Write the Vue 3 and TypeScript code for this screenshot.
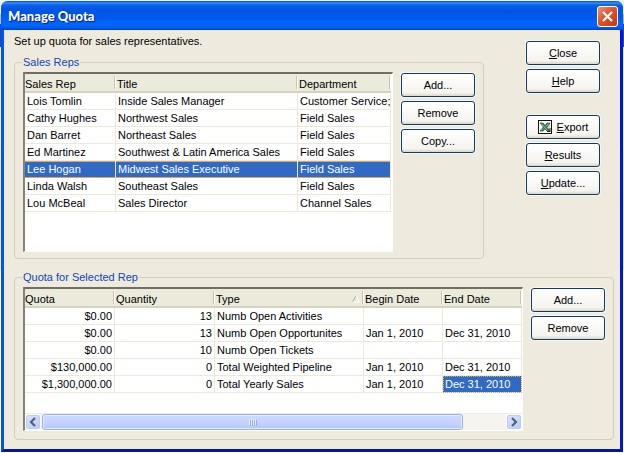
<script setup lang="ts">
import { ref } from 'vue'

interface Rep {
  name: string
  title: string
  department: string
}

interface Quota {
  quota: string
  quantity: number
  type: string
  begin: string
  end: string
}

const reps: Rep[] = [
  { name: 'Lois Tomlin', title: 'Inside Sales Manager', department: 'Customer Service;' },
  { name: 'Cathy Hughes', title: 'Northwest Sales', department: 'Field Sales' },
  { name: 'Dan Barret', title: 'Northeast Sales', department: 'Field Sales' },
  { name: 'Ed Martinez', title: 'Southwest & Latin America Sales', department: 'Field Sales' },
  { name: 'Lee Hogan', title: 'Midwest Sales Executive', department: 'Field Sales' },
  { name: 'Linda Walsh', title: 'Southeast Sales', department: 'Field Sales' },
  { name: 'Lou McBeal', title: 'Sales Director', department: 'Channel Sales' },
]

const quotas: Quota[] = [
  { quota: '$0.00', quantity: 13, type: 'Numb Open Activities', begin: '', end: '' },
  { quota: '$0.00', quantity: 13, type: 'Numb Open Opportunites', begin: 'Jan 1, 2010', end: 'Dec 31, 2010' },
  { quota: '$0.00', quantity: 10, type: 'Numb Open Tickets', begin: '', end: '' },
  { quota: '$130,000.00', quantity: 0, type: 'Total Weighted Pipeline', begin: 'Jan 1, 2010', end: 'Dec 31, 2010' },
  { quota: '$1,300,000.00', quantity: 0, type: 'Total Yearly Sales', begin: 'Jan 1, 2010', end: 'Dec 31, 2010' },
]

const selectedRep = ref(4)
const selectedQuota = ref(4)
</script>

<template>
  <div class="desktop">
    <main class="window">
      <header class="titlebar">
        <h1>Manage Quota</h1>
        <button class="close" type="button" aria-label="Close window">
          <svg viewBox="0 0 21 21" width="21" height="21" aria-hidden="true">
            <path d="M5.500 5.500L15.500 15.500M15.500 5.500L5.500 15.500" stroke="#fff" stroke-width="2.4" fill="none" />
          </svg>
        </button>
      </header>

      <div class="content">
        <div class="upper">
          <div class="left">
            <p class="intro">Set up quota for sales representatives.</p>
            <fieldset class="group">
              <legend>Sales Reps</legend>
              <div class="group-body">
                <div class="list reps">
                  <table>
                    <colgroup>
                      <col class="c-name" />
                      <col class="c-title" />
                      <col />
                    </colgroup>
                    <thead>
                      <tr>
                        <th>Sales Rep</th>
                        <th>Title</th>
                        <th>Department</th>
                      </tr>
                    </thead>
                    <tbody>
                      <tr
                        v-for="(rep, i) in reps"
                        :key="rep.name"
                        :class="{ selected: i === selectedRep }"
                        @click="selectedRep = i"
                      >
                        <td>{{ rep.name }}</td>
                        <td>{{ rep.title }}</td>
                        <td>{{ rep.department }}</td>
                      </tr>
                    </tbody>
                  </table>
                </div>
                <div class="buttons">
                  <button class="btn" type="button">Add...</button>
                  <button class="btn" type="button">Remove</button>
                  <button class="btn" type="button">Copy...</button>
                </div>
              </div>
            </fieldset>
          </div>

          <div class="buttons side">
            <button class="btn" type="button"><span><u>C</u>lose</span></button>
            <button class="btn" type="button"><span><u>H</u>elp</span></button>
            <button class="btn export" type="button">
              <svg viewBox="0 0 14 14" width="14" height="14" aria-hidden="true">
                <rect x="0.5" y="0.5" width="13" height="13" fill="#fff" stroke="#111" />
                <path d="M9 3h3v9H9z" fill="#c9d6c9" />
                <path d="M2 3h3l2 2.5L9 3h3L8.6 7.2 12 11H9L6.900 8.800 5 11H2l3.400-4z" fill="#3f8450" stroke="#123c1c" stroke-width="0.7" />
                <path d="M3 3.500l6.500 7M10.500 3.500L8 6.500M5 8.500L3 10.500" stroke="#b9dcbd" stroke-width="0.7" />
                <path d="M9 11.500h3.500M12 8v3" stroke="#222" />
              </svg>
              <span><u>E</u>xport</span>
            </button>
            <button class="btn" type="button"><span><u>R</u>esults</span></button>
            <button class="btn" type="button"><span><u>U</u>pdate...</span></button>
          </div>
        </div>

        <fieldset class="group">
          <legend>Quota for Selected Rep</legend>
          <div class="group-body">
            <div class="list quotas">
              <table>
                <colgroup>
                  <col class="c-quota" />
                  <col class="c-quantity" />
                  <col />
                  <col class="c-date" />
                  <col class="c-date" />
                </colgroup>
                <thead>
                  <tr>
                    <th>Quota</th>
                    <th>Quantity</th>
                    <th>
                      <div class="sorted">
                        Type
                        <svg viewBox="0 0 8 8" width="8" height="8" aria-hidden="true">
                          <path d="M0.500 7L4 1" stroke="#aca899" fill="none" />
                          <path d="M4 1L7.500 7H0.500" stroke="#fff" fill="none" />
                        </svg>
                      </div>
                    </th>
                    <th>Begin Date</th>
                    <th>End Date</th>
                  </tr>
                </thead>
                <tbody>
                  <tr v-for="(row, i) in quotas" :key="row.type" @click="selectedQuota = i">
                    <td class="num">{{ row.quota }}</td>
                    <td class="num">{{ row.quantity }}</td>
                    <td>{{ row.type }}</td>
                    <td>{{ row.begin }}</td>
                    <td :class="{ focused: i === selectedQuota }">{{ row.end }}</td>
                  </tr>
                </tbody>
              </table>
              <div class="scrollbar">
                <button class="arrow" type="button" aria-label="Scroll left">
                  <svg viewBox="0 0 8 10" width="8" height="10" aria-hidden="true">
                    <path d="M6 1L2 5L6 9" stroke="#4d6185" stroke-width="2.200" fill="none" />
                  </svg>
                </button>
                <div class="track">
                  <div class="thumb"><i></i><i></i><i></i><i></i></div>
                </div>
                <button class="arrow" type="button" aria-label="Scroll right">
                  <svg viewBox="0 0 8 10" width="8" height="10" aria-hidden="true">
                    <path d="M2 1L6 5L2 9" stroke="#4d6185" stroke-width="2.200" fill="none" />
                  </svg>
                </button>
              </div>
            </div>
            <div class="buttons">
              <button class="btn" type="button">Add...</button>
              <button class="btn" type="button">Remove</button>
            </div>
          </div>
        </fieldset>
      </div>
    </main>
  </div>
</template>

<style>
body {
  margin: 0;
}
</style>

<style scoped>
* {
  box-sizing: border-box;
}

.desktop {
  display: flex;
  min-height: 100vh;
  padding: 1px;
  background: linear-gradient(#eaf6ff 0 14px, #a9bdf5 14px 24px, #1a45d0 24px 47px, #e9effc 47px 150px, #dfeafa 150px 270px, #fff 270px);
  font: 11px/14px "Liberation Sans", Arial, sans-serif;
  color: #000;
}

.window {
  display: flex;
  flex: 1;
  flex-direction: column;
  min-width: 0;
  border: 3px solid;
  border-top: 0;
  border-color: #0855dd #0019cf #001a90 #0855dd;
  border-radius: 7px 7px 0 0;
  background: #eeebde;
}

.titlebar {
  display: flex;
  align-items: center;
  justify-content: space-between;
  height: 29px;
  margin: 0 -3px;
  padding: 1px 5px 0 7px;
  border-radius: 7px 7px 0 0;
  background: linear-gradient(#0a4bc8 0, #3a8cf5 2px, #0a62ee 4px, #0054e3 9px, #0058ea 16px, #0066ff 22px, #0062f8 26px, #0040cf 29px);
}

h1 {
  margin: 0;
  font: 900 13px/18px Lato, sans-serif;
  color: #fff;
  text-shadow: 1px 1px 1px #0a1f7a;
}

.close {
  display: flex;
  padding: 0;
  border: 1px solid #fff;
  border-radius: 3px;
  background: linear-gradient(135deg, #ee9476, #e0532b 45%, #c8360f);
}

.close svg {
  display: block;
  width: 19px;
  height: 19px;
}

.content {
  display: flex;
  flex: 1;
  flex-direction: column;
  gap: 11px;
  padding: 4px 6px 9px 10px;
}

.upper {
  display: flex;
  justify-content: space-between;
  gap: 42px;
  padding-right: 14px;
}

.left {
  flex: 1;
  min-width: 0;
}

.intro {
  margin: 0 0 7px;
}

.group {
  display: flex;
  flex-direction: column;
  min-width: 0;
  margin: 0;
  padding: 3px 8px 6px 8px;
  border: 1px solid #d0d0bf;
  border-radius: 4px;
}

.content > .group {
  flex: 1;
  padding-bottom: 8px;
}

legend {
  margin-left: -1px;
  padding: 0 1px;
  color: #1046b5;
}

.group-body {
  display: flex;
  flex: 1;
  gap: 8px;
}

.list {
  display: flex;
  flex: 1;
  flex-direction: column;
  min-width: 0;
  overflow: hidden;
  border: 1px solid #fff;
  border-top: 2px solid #716f64;
  border-left: 2px solid #85837a;
  background: #fff;
}

.reps {
  min-height: 180px;
  padding-right: 1px;
}

table {
  width: 100%;
  border-spacing: 0;
  table-layout: fixed;
}

.c-name {
  width: 91px;
}

.c-title {
  width: 182px;
}

.c-quota {
  width: 90px;
}

.c-quantity {
  width: 100px;
}

.c-date {
  width: 79px;
}

th,
td {
  padding: 0 0 0 2px;
  text-align: left;
  font-weight: normal;
  white-space: nowrap;
}

th {
  height: 19px;
  padding: 2px 0 0;
  border-bottom: 2px solid #d6d2c2;
  background: linear-gradient(#c5c2b2, #c5c2b2) right 1px center / 1px 13px no-repeat,
    linear-gradient(#fff, #fff) right center / 1px 13px no-repeat, #ebeadb;
}

th:not(:first-child) {
  padding-left: 1px;
}

td {
  height: 17px;
  border-right: 1px solid #ece9d8;
  border-bottom: 1px solid #ece9d8;
}

.num {
  padding-right: 2px;
  text-align: right;
}

.sorted {
  display: flex;
  align-items: center;
  justify-content: space-between;
  padding-right: 4px;
}

.selected td {
  background: #316ac5;
  color: #fff;
  border-bottom-color: #d8a860;
  box-shadow: inset 0 1px #d8a860;
}

.focused {
  background: #316ac5;
  color: #fff;
  outline: 1px dotted #d8a860;
  outline-offset: -1px;
}

.buttons {
  display: flex;
  flex-direction: column;
  gap: 4px;
  padding-top: 1px;
}

.side {
  padding-top: 7px;
}

.btn {
  display: flex;
  align-items: center;
  justify-content: center;
  gap: 5px;
  width: 74px;
  height: 24px;
  padding: 0 0 1px;
  border: 1px solid #123a62;
  border-radius: 3px;
  background: linear-gradient(#fff, #f5f4ef 85%, #d9d5c9);
  box-shadow: 0 0 0 1px #f3f6f2;
  color: #000;
  font: inherit;
}

.export {
  margin-top: 18px;
}

.scrollbar {
  display: flex;
  gap: 1px;
  height: 17px;
  margin-top: auto;
  border-top: 1px solid #eeede5;
  background: #f5f4ee;
}

.arrow {
  display: flex;
  align-items: center;
  justify-content: center;
  width: 16px;
  padding: 0;
  border: 1px solid #fff;
  border-radius: 3px;
  background: linear-gradient(135deg, #dbe6ff, #b6caf8);
  box-shadow: inset 0 0 0 1px #b9cbf3;
}

.track {
  flex: 1;
}

.thumb {
  display: flex;
  align-items: center;
  justify-content: center;
  gap: 1px;
  width: 91%;
  height: 16px;
  border: 1px solid #98b1e4;
  border-radius: 3px;
  background: linear-gradient(#cbdaff, #c2d3fe 60%, #b2c6f7);
  box-shadow: inset 0 0 0 1px #e3ecff;
}

.thumb i {
  width: 1px;
  height: 6px;
  background: #eef4fe;
  box-shadow: 1px 1px #8cb0f8;
}
</style>
